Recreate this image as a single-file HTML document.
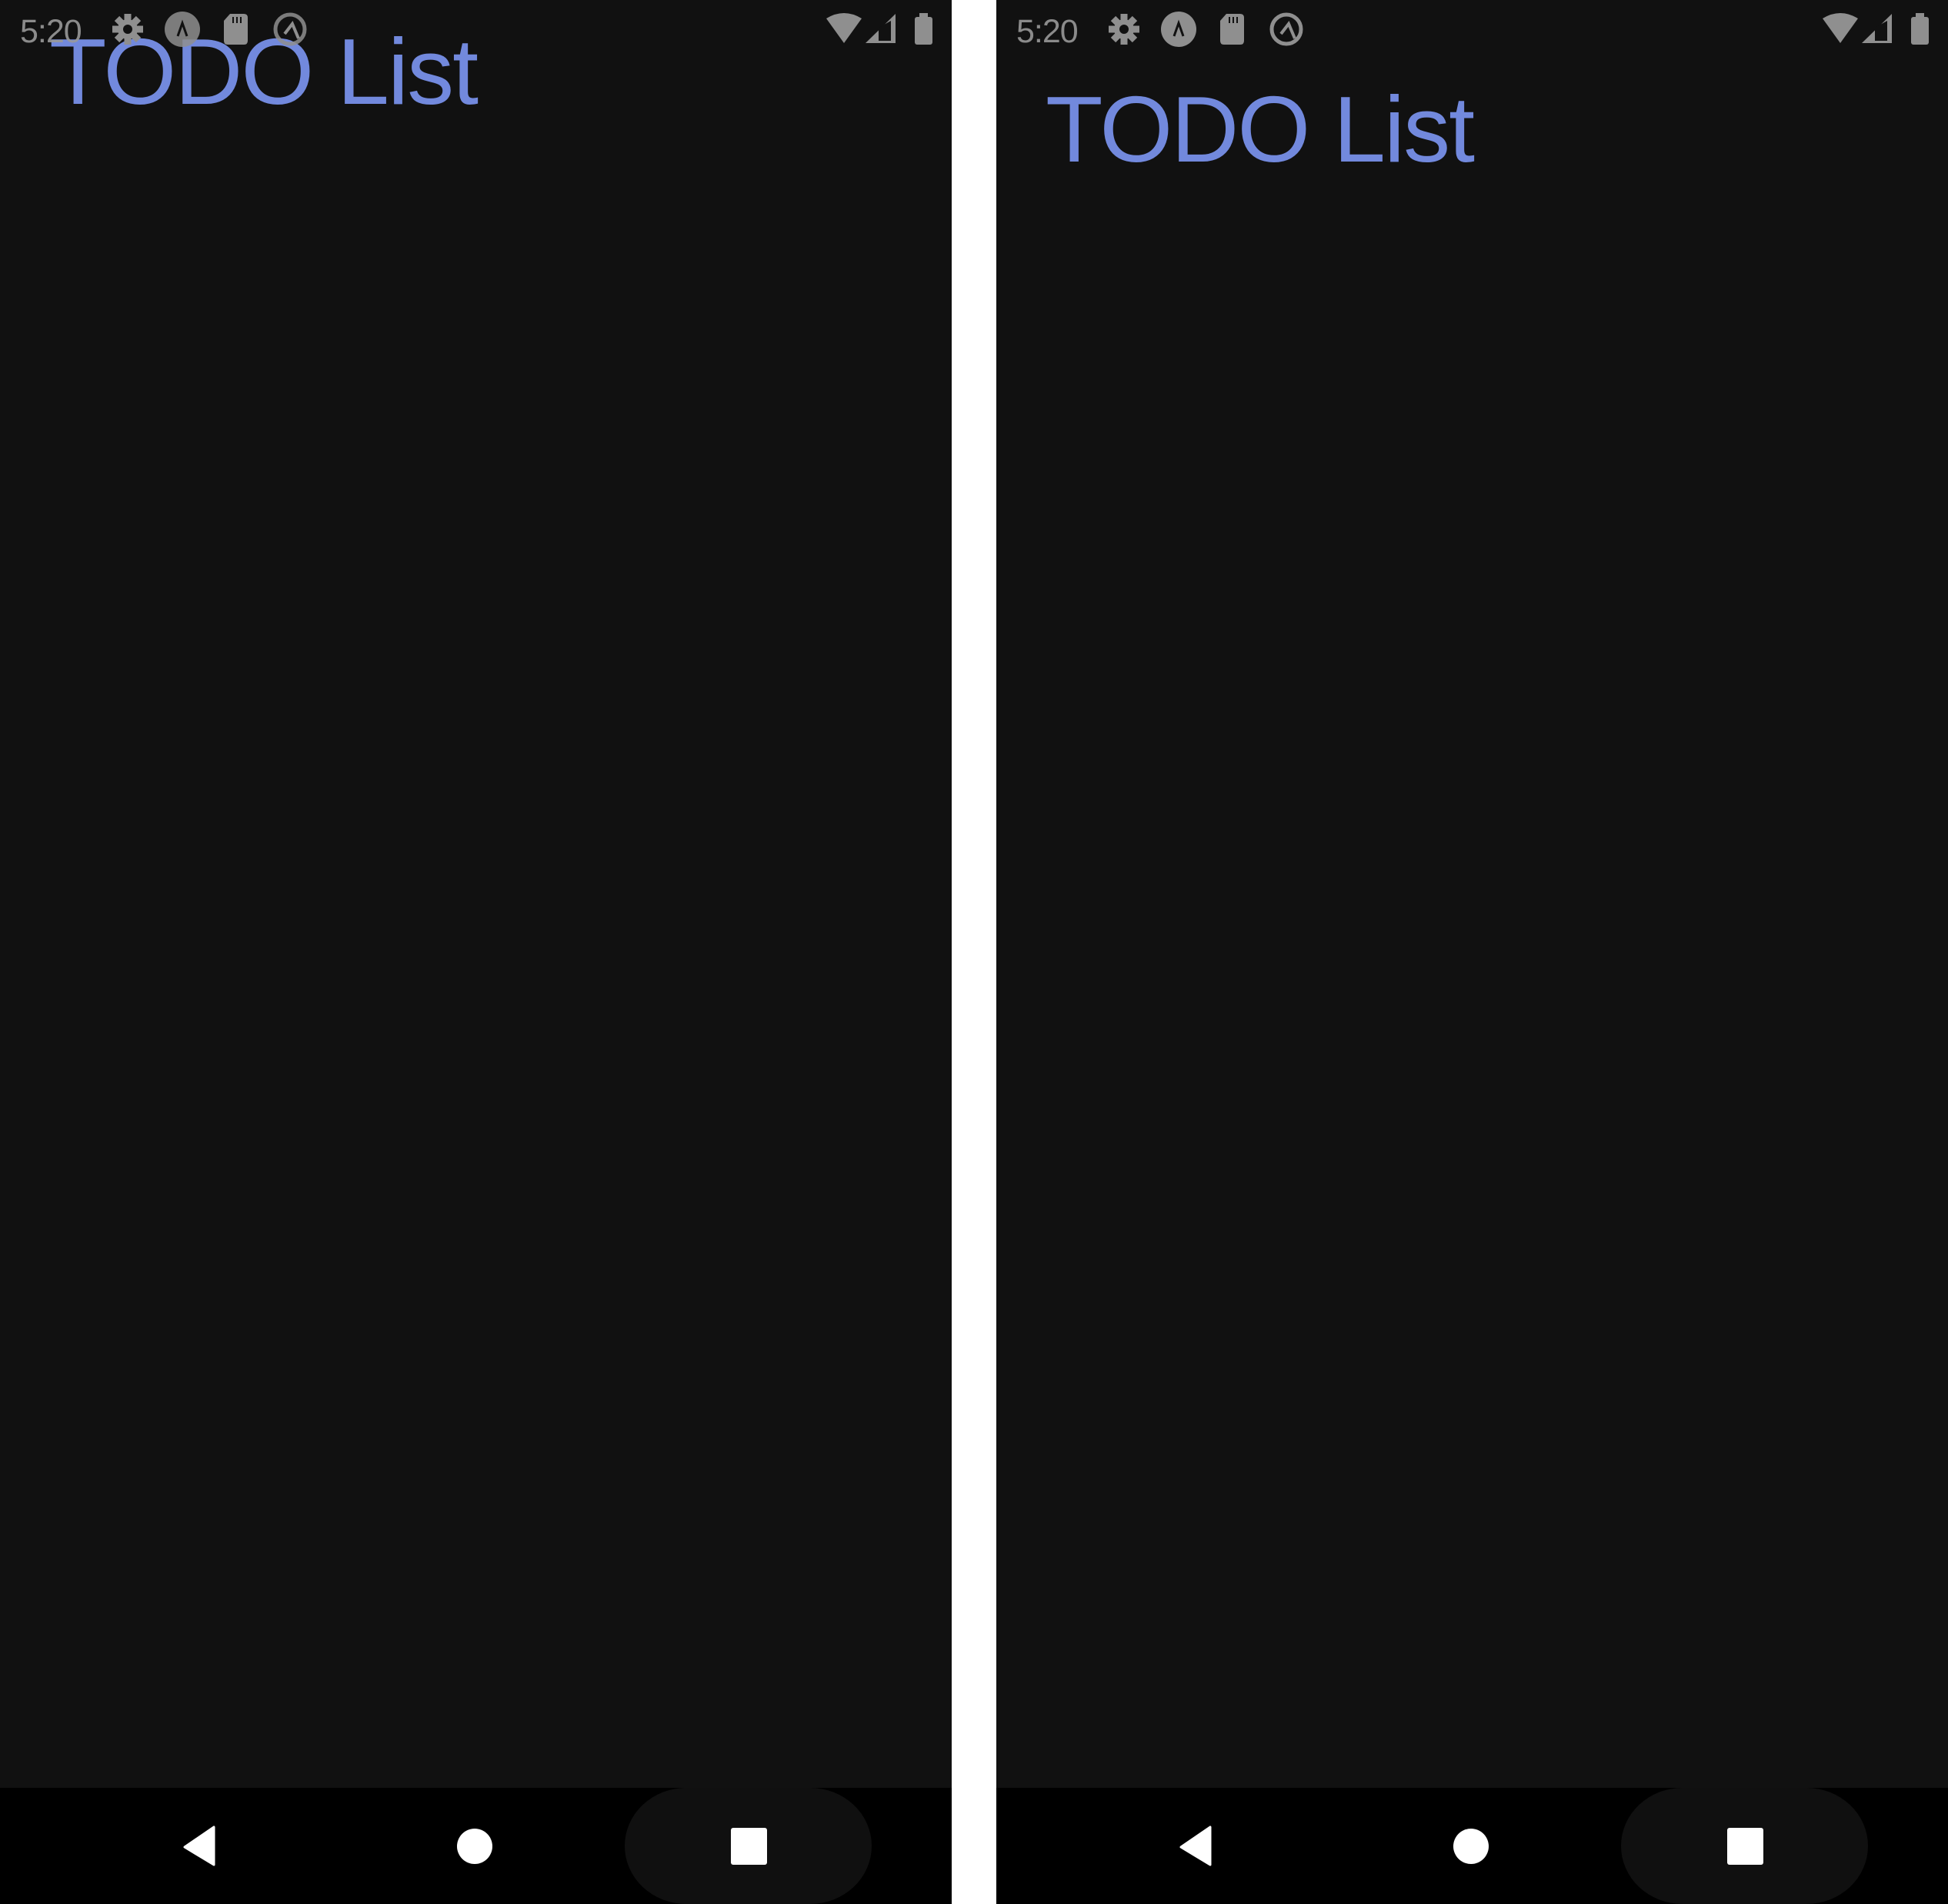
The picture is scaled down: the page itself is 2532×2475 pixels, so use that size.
<!DOCTYPE html>
<html><head><meta charset="utf-8"><style>
*{margin:0;padding:0;box-sizing:border-box}
body{width:2532px;height:2475px;background:#fff;position:relative;overflow:hidden;font-family:"Liberation Sans",sans-serif}
.p{position:absolute;top:0;width:1237px;height:2475px;background:#111;overflow:hidden}
.title{position:absolute;left:64px;font-size:122px;line-height:122px;color:#7289dd;letter-spacing:-2px;white-space:nowrap}
.sb{position:absolute;left:0;top:0;width:1237px;height:80px;z-index:2}
.time{position:absolute;left:26px;top:20px;font-size:43px;line-height:43px;color:#999;opacity:.9;letter-spacing:-1px}
.nav{position:absolute;left:0;top:2324px;width:1237px;height:151px;background:#000}
</style></head><body>
<div class="p" style="left:0">
 <div class="title" style="top:32px">TODO List</div>
 <div class="sb">
  <div class="time">5:20</div>
  <svg width="1237" height="80" style="position:absolute;left:0;top:0" fill="#8f8f8f">
   <g transform="translate(166,38)"><circle r="13"/><g stroke="#8f8f8f" stroke-width="9"><line x1="0" y1="-20" x2="0" y2="20"/><line x1="-20" y1="0" x2="20" y2="0"/><line x1="-14" y1="-14" x2="14" y2="14"/><line x1="-14" y1="14" x2="14" y2="-14"/></g><circle r="6" fill="#111"/></g>
   <circle cx="237" cy="38" r="23" opacity=".85"/><path d="M231 47 L237 30 L243 47" stroke="#111" stroke-width="3" fill="none"/>
   <path d="M299 18 H317 Q322 18 322 23 V53 Q322 58 317 58 H296 Q291 58 291 53 V27 Z"/><g stroke="#111" stroke-width="2"><line x1="303" y1="22" x2="303" y2="30"/><line x1="308" y1="22" x2="308" y2="30"/><line x1="313" y1="22" x2="313" y2="30"/></g>
   <circle cx="377" cy="38" r="19" fill="none" stroke="#8f8f8f" stroke-width="5" opacity=".85"/><path d="M370 44 L380 31 L388 50" fill="none" stroke="#8f8f8f" stroke-width="4"/>
   <path d="M1074 24 Q1097 10 1120 24 L1097 56 Z"/>
   <path d="M1125 56 L1164 18 V56 Z"/><path d="M1142 53 V36 L1158 27 V53 Z" fill="#111"/>
   <rect x="1189" y="22" width="23" height="36" rx="3"/><rect x="1195" y="17" width="11" height="6"/>
  </svg>
 </div>
 <div class="nav">
  <svg width="1237" height="151" style="position:absolute;left:0;top:0">
   <rect x="812" y="0" width="321" height="151" rx="80" fill="#101010"/>
   <path d="M278 51 L278 100 L240 77 Z" fill="#fff" stroke="#fff" stroke-width="3" stroke-linejoin="round"/>
   <circle cx="617" cy="76" r="23" fill="#fff"/>
   <rect x="950" y="52" width="47" height="48" rx="3" fill="#fff"/>
  </svg>
 </div>
</div>
<div class="p" style="left:1295px">
 <div class="title" style="top:107px">TODO List</div>
 <div class="sb">
  <div class="time">5:20</div>
  <svg width="1237" height="80" style="position:absolute;left:0;top:0" fill="#8f8f8f">
   <g transform="translate(166,38)"><circle r="13"/><g stroke="#8f8f8f" stroke-width="9"><line x1="0" y1="-20" x2="0" y2="20"/><line x1="-20" y1="0" x2="20" y2="0"/><line x1="-14" y1="-14" x2="14" y2="14"/><line x1="-14" y1="14" x2="14" y2="-14"/></g><circle r="6" fill="#111"/></g>
   <circle cx="237" cy="38" r="23"/><path d="M231 47 L237 30 L243 47" stroke="#111" stroke-width="3" fill="none"/>
   <path d="M299 18 H317 Q322 18 322 23 V53 Q322 58 317 58 H296 Q291 58 291 53 V27 Z"/><g stroke="#111" stroke-width="2"><line x1="303" y1="22" x2="303" y2="30"/><line x1="308" y1="22" x2="308" y2="30"/><line x1="313" y1="22" x2="313" y2="30"/></g>
   <circle cx="377" cy="38" r="19" fill="none" stroke="#8f8f8f" stroke-width="5"/><path d="M370 44 L380 31 L388 50" fill="none" stroke="#8f8f8f" stroke-width="4"/>
   <path d="M1074 24 Q1097 10 1120 24 L1097 56 Z"/>
   <path d="M1125 56 L1164 18 V56 Z"/><path d="M1142 53 V36 L1158 27 V53 Z" fill="#111"/>
   <rect x="1189" y="22" width="23" height="36" rx="3"/><rect x="1195" y="17" width="11" height="6"/>
  </svg>
 </div>
 <div class="nav">
  <svg width="1237" height="151" style="position:absolute;left:0;top:0">
   <rect x="812" y="0" width="321" height="151" rx="80" fill="#101010"/>
   <path d="M278 51 L278 100 L240 77 Z" fill="#fff" stroke="#fff" stroke-width="3" stroke-linejoin="round"/>
   <circle cx="617" cy="76" r="23" fill="#fff"/>
   <rect x="950" y="52" width="47" height="48" rx="3" fill="#fff"/>
  </svg>
 </div>
</div>
</body></html>
